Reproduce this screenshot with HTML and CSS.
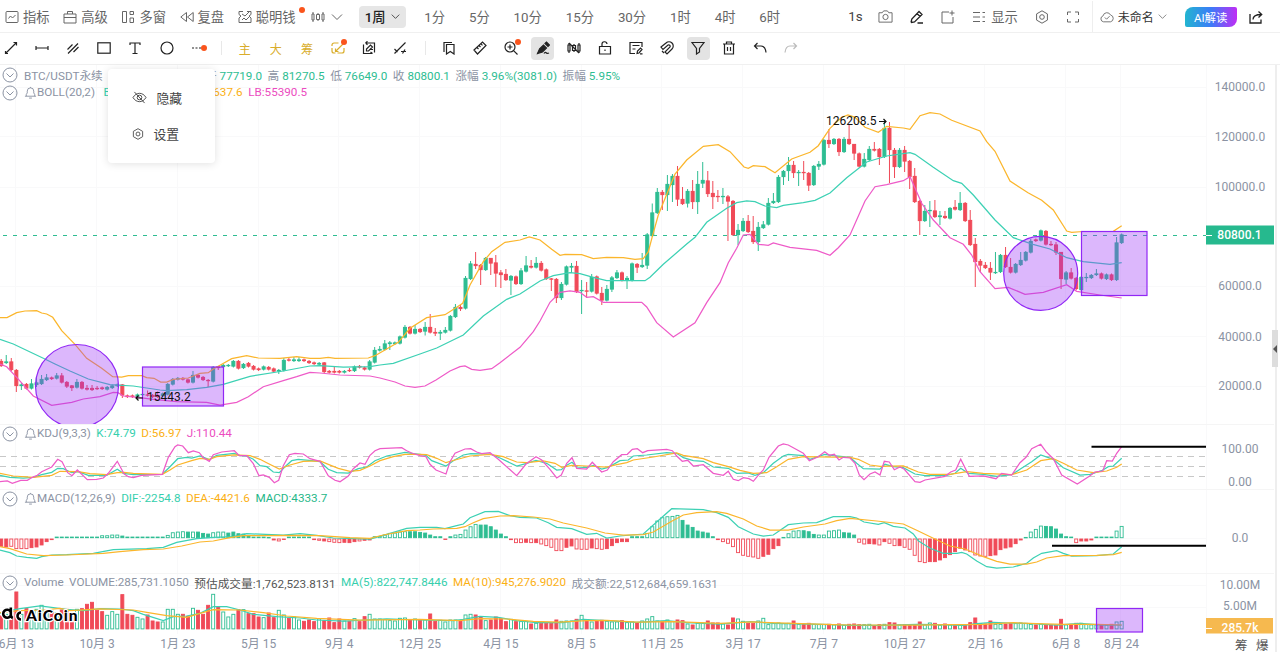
FILE: index.html
```html
<!DOCTYPE html>
<html lang="zh-CN">
  <head>
    <title>AiCoin</title>
    <meta charset="utf-8" />
    <link rel="stylesheet" href="styles.css">
  </head>
  <body>
    <svg class="sprite">
      <symbol id="chevron" viewBox="0 0 12 12"><path d="M1 3.5l5 5 5-5" /></symbol>
      <symbol id="collapse" viewBox="0 0 16 16"><circle cx="8" cy="8" r="7" /><path d="M4.5 6.5L8 10l3.500-3.500" /></symbol>
      <symbol id="bell" viewBox="0 0 14 14"><path d="M1 11h12M2.500 11V9l1-1.500V5.500a3.500 3.500 0 0 1 7 0v2L11.500 9v2M5.500 13h3M7 2V1" /></symbol>
      <symbol id="candles" viewBox="0 0 14 14"><path d="M1 4h2v6H1zM5.500 4.500h3v5h-3zM11 4h2v6h-2zM2 2v2M2 10v2M7 3v1.500M7 9.500V11M12 2v2M12 10v2" /></symbol>
      <symbol id="gear" viewBox="0 0 14 14"><path d="M7 .8l5.400 3.100v6.200L7 13.200l-5.400-3.100V3.900z" /><circle cx="7" cy="7" r="2.300" /></symbol>
    </svg>

    <header class="topbar">
      <div class="menu-item"><svg class="icon" viewBox="0 0 14 14"><rect x="1" y="1.500" width="12" height="11" rx="1" /><path d="M3.500 8.500l2-2.500 2 2L10.500 5" /></svg>指标</div>
      <div class="menu-item"><svg class="icon" viewBox="0 0 14 14"><path d="M1 4h12v9H1zM1 7.500h12M4.500 4V1.500h5V4" /></svg>高级</div>
      <div class="menu-item"><svg class="icon" viewBox="0 0 14 14"><path d="M1.500 1.500h4v11h-4zM9 1.500h3.500v3H9zM9 8h3.500v4.500H9z" /></svg>多窗</div>
      <div class="menu-item"><svg class="icon" viewBox="0 0 14 14"><path d="M6.500 2.500v9L.8 7zM13.200 2.500v9L7.500 7z" /></svg>复盘</div>
      <div class="menu-item menu-wide"><svg class="icon" viewBox="0 0 14 14"><path d="M5 1.500H1v3l2 1.500-2 2v4.500h12V8l-2-2 2-1.500v-3H9M4 4l3 2 4-4M4 10l2-2 2 2 3-3" /></svg>聪明钱<i class="dot"></i></div>
      <svg class="icon" viewBox="0 0 14 14"><use href="#candles" /></svg>
      <svg class="icon icon-arrow" viewBox="0 0 12 12"><use href="#chevron" /></svg>
      <button class="period-active">1周<svg class="icon" viewBox="0 0 12 12"><use href="#chevron" /></svg></button>
      <nav class="periods">
        <span>1分</span><span>5分</span><span>10分</span><span>15分</span><span>30分</span><span>1时</span><span>4时</span><span>6时</span>
      </nav>
      <div class="actions">
        <span class="second">1s</span>
        <svg class="icon icon-camera" viewBox="0 0 16 16"><path d="M1 4h3.500L6 2h4l1.500 2H15v10H1z" /><circle cx="8" cy="8.500" r="2.800" /></svg>
        <svg class="icon icon-edit" viewBox="0 0 14 14"><path d="M1 12.500l.8-3.500L9 1.500l3 3L4.500 12 1 12.500M7 3.500l3 3M7.500 13H13" /></svg>
        <svg class="icon icon-add" viewBox="0 0 14 14"><path d="M8 2H1v11h11V7M11 .5v5M8.500 3h5" /></svg>
        <span class="display"><svg class="icon" viewBox="0 0 14 14"><path d="M1 2.500h7M1 7h7M1 11.500h7M10.500 2.500H13M10.500 7H13M10.500 11.500H13" /></svg>显示</span>
        <svg class="icon icon-gear" viewBox="0 0 14 14"><use href="#gear" /></svg>
        <svg class="icon icon-full" viewBox="0 0 14 14"><path d="M1.500 5V2H5M9 2h3.500v3M12.500 9v3H9M5 12H1.500V9" /></svg>
      </div>
      <div class="layout-name">
        <svg class="icon" viewBox="0 0 16 14"><path d="M4 12.500a3.500 3.500 0 0 1-.5-6.800 4.500 4.500 0 0 1 8.500-1 4 4 0 0 1 0 7.800zM5.500 7.500l2 2 3.500-3.500" /></svg>
        未命名
        <svg class="icon name-arrow" viewBox="0 0 12 12"><use href="#chevron" /></svg>
      </div>
      <button class="ai-button">AI解读</button>
      <svg class="icon icon-share" viewBox="0 0 14 14"><path d="M1 4v9h11V9.500M4 9.500C4 6 6.500 4.500 12.500 4.500M9.500 1.500l3.200 3-3.200 3" /></svg>
    </header>

    <div class="drawbar">
      <span class="tool"><svg viewBox="0 0 14 14"><path d="M2 12L12 2M9.500 1.500h3v3M1.500 10v2.500H4" /></svg></span>
      <span class="tool"><svg viewBox="0 0 14 14"><path d="M1 7h12M1 5v4M13 5v4" /></svg></span>
      <span class="tool"><svg viewBox="0 0 14 14"><path d="M1.500 8.500l5-5M2 12.500l10-10M7.500 11l5-5" /></svg></span>
      <span class="tool"><svg viewBox="0 0 14 14"><rect x=".8" y="1.800" width="12.400" height="10.400" /></svg></span>
      <span class="tool"><svg viewBox="0 0 14 14"><path d="M2 4V2h10v2M7 2v10.500M4.500 12.500h5" /></svg></span>
      <span class="tool"><svg viewBox="0 0 14 14"><circle cx="7" cy="7" r="6" /></svg></span>
      <span class="tool"><svg viewBox="0 0 14 14"><path class="dots" d="M1 7h10" /></svg><i class="dot dot-center"></i></span>
      <i class="separator"></i>
      <span class="tool gold">主</span>
      <span class="tool gold">大</span>
      <span class="tool gold">筹</span>
      <span class="tool gold"><svg viewBox="0 0 14 14"><path d="M7.500 2H3a2 2 0 0 0-2 2v1M1 7v3a2 2 0 0 0 2 2h1.500M6.500 12H11a2 2 0 0 0 2-2V7M4.500 10.500L12 3M4.500 7.500v3h3" /></svg><i class="dot"></i></span>
      <span class="tool"><svg viewBox="0 0 14 14"><path d="M4 2h8.500v9.500M3.500 2L5.500.3M3.500 2l2 1.700M10.500 12.500H1.500V3.500M10.500 12.500l-2-1.500M4.500 10V8l4-4 2 2-4 4zM8 8.500h3" /></svg></span>
      <span class="tool"><svg viewBox="0 0 14 14"><path d="M1.500 12.500L12.500 1.500M1.500 8l3 3M8 10.500h5M9.500 12.500l2.500-4" /></svg></span>
      <i class="separator separator-wide"></i>
      <span class="tool"><svg viewBox="0 0 14 14"><path d="M2 11V1.500h8M4.500 3.500H12V13l-3.700-2.500L4.500 13z" /></svg></span>
      <span class="tool"><svg viewBox="0 0 14 14"><path d="M1 9l8.500-8L13 4.500 4.500 13zM4 6.500l1.500 1.500M6 4.500L7.500 6M8 2.800L9.500 4.300" /></svg></span>
      <span class="tool"><svg viewBox="0 0 14 14"><circle cx="6" cy="6" r="5" /><path d="M9.800 9.800l3.700 3.700M3.500 6h5M6 3.500v5" /></svg><i class="dot"></i></span>
      <span class="tool selected"><svg viewBox="0 0 14 14"><path class="solid" d="M3.500 8l4-4 3 3-4 4-5 1.500zM9 2.500l1.500-1.500 3 3L12 5.500z" /><path d="M8 12.500c1-2 2-1 2.500-.5s1.500.5 2.500 0" /></svg></span>
      <span class="tool"><svg viewBox="0 0 14 14"><use href="#candles" /><path d="M2 2l10 10" /></svg></span>
      <span class="tool"><svg viewBox="0 0 14 14"><path d="M1.500 5.500h11v7.500h-11zM4 5.500V3.500A2.500 2.500 0 0 1 9 3M7 8.500V10" /></svg></span>
      <span class="tool"><svg viewBox="0 0 14 14"><path d="M13 6V1.500H1v11h5M3.500 4.500h7M3.500 8h3M8 12.500l.5-2.500 3-3L13 8.500l-3 3.500zM11 12.800h2.500" /></svg></span>
      <span class="tool"><svg viewBox="0 0 14 14"><path d="M1 6l5-4a4 4 0 0 1 6 6l-5 5-2-2 5-5a1.500 1.500 0 0 0-2-2L3 8.500zM4 12L2 10" /></svg></span>
      <span class="tool selected"><svg viewBox="0 0 14 14"><path d="M1 1.500h12L8.500 7.500V11l-3 2V7.500z" /></svg></span>
      <span class="tool"><svg viewBox="0 0 14 14"><path d="M1 3h12M4.500 3V1h5v2M2.500 3v10h9V3M5.500 6v4M8.500 6v4" /></svg></span>
      <span class="tool"><svg viewBox="0 0 14 14"><path d="M4.500 2L1.500 5l3 3M1.500 5H8c3 0 4.500 2 5 6.500" /></svg></span>
      <span class="tool disabled"><svg viewBox="0 0 14 14"><path d="M9.500 2l3 3-3 3M12.500 5H6c-3 0-4.500 2-5 6.500" /></svg></span>
    </div>

    <main class="chart">
      <section class="panel">
        <div class="legend">
          <div class="legend-row">
            <svg class="collapse" viewBox="0 0 16 16"><use href="#collapse" /></svg>
            <span class="symbol-name">BTC/USDT永续</span>
            <span>开 <b>77719.0</b></span>
            <span>高 <b>81270.5</b></span>
            <span>低 <b>76649.0</b></span>
            <span>收 <b>80800.1</b></span>
            <span>涨幅 <b>3.96%(3081.0)</b></span>
            <span>振幅 <b>5.95%</b></span>
          </div>
          <div class="legend-row">
            <svg class="collapse" viewBox="0 0 16 16"><use href="#collapse" /></svg>
            <svg class="bell" viewBox="0 0 14 14"><use href="#bell" /></svg>
            <span class="boll-name">BOLL(20,2)</span>
            <span class="teal">B</span>
            <span class="orange boll-ub">637.6</span>
            <span class="pink">LB:55390.5</span>
          </div>
        </div>
        <svg id="price" class="plot" viewBox="0 65 1274 359" height="359"></svg>
        <div class="popup">
          <div class="popup-item"><svg viewBox="0 0 16 14"><path d="M1 7c3.500-6 10.500-6 14 0-3.500 6-10.500 6-14 0zM2.500 1l11 12" /><circle cx="8" cy="7" r="2.500" /></svg>隐藏</div>
          <div class="popup-item popup-settings"><svg viewBox="0 0 14 14"><use href="#gear" /></svg>设置</div>
        </div>
      </section>

      <section class="panel">
        <div class="legend">
          <div class="legend-row">
            <svg class="collapse" viewBox="0 0 16 16"><use href="#collapse" /></svg>
            <svg class="bell" viewBox="0 0 14 14"><use href="#bell" /></svg>
            <span>KDJ(9,3,3)</span>
            <span class="teal">K:74.79</span>
            <span class="orange">D:56.97</span>
            <span class="pink">J:110.44</span>
          </div>
        </div>
        <svg id="kdj" class="plot" viewBox="0 424 1274 65" height="65"></svg>
      </section>

      <section class="panel">
        <div class="legend">
          <div class="legend-row">
            <svg class="collapse" viewBox="0 0 16 16"><use href="#collapse" /></svg>
            <svg class="bell" viewBox="0 0 14 14"><use href="#bell" /></svg>
            <span>MACD(12,26,9)</span>
            <span class="teal">DIF:-2254.8</span>
            <span class="orange">DEA:-4421.6</span>
            <span class="green">MACD:4333.7</span>
          </div>
        </div>
        <svg id="macd" class="plot" viewBox="0 489 1274 84" height="84"></svg>
      </section>

      <section class="panel">
        <div class="legend">
          <div class="legend-row">
            <svg class="collapse" viewBox="0 0 16 16"><use href="#collapse" /></svg>
            <span>Volume</span>
            <span>VOLUME:285,731.1050</span>
            <span class="dark">预估成交量:1,762,523.8131</span>
            <span class="teal">MA(5):822,747.8446</span>
            <span class="orange">MA(10):945,276.9020</span>
            <span>成交额:22,512,684,659.1631</span>
          </div>
        </div>
        <svg id="volume" class="plot" viewBox="0 573 1274 79" height="79"></svg>
      </section>
      <div class="handle"></div>
    </main>

    <script src="chart.js"></script>
  </body>
</html>
```

FILE: styles.css
```css
* {
  box-sizing: border-box;
}

body {
  width: 1280px;
  height: 652px;
  margin: 0;
  overflow: hidden;
  font-family: Roboto, "Noto Sans CJK SC", sans-serif;
  font-size: 13.3px;
  color: #666;
  background-color: #fff;
}

svg {
  fill: none;
  stroke: currentColor;
  flex: none;
}

.sprite {
  display: none;
}

.topbar {
  display: flex;
  align-items: center;
  height: 33px;
  padding: 0 0 0 5px;
  border-top: 1px solid #fff;
  border-bottom: 1px solid #f0f0f0;
  white-space: nowrap;
}

.icon {
  width: 14px;
  height: 14px;
}

.menu-item {
  position: relative;
  display: flex;
  align-items: center;
  gap: 4px;
  width: 58.2px;
}

.menu-wide {
  width: 73px;
}

.dot {
  position: absolute;
  top: 0;
  right: 6px;
  width: 6px;
  height: 6px;
  border-radius: 50%;
  background-color: #fa541c;
}

.icon-arrow {
  width: 12px;
  height: 12px;
  margin-left: 6px;
}

button {
  border: none;
  font-family: inherit;
  padding: 0;
}

.period-active {
  display: flex;
  align-items: center;
  justify-content: center;
  gap: 5px;
  width: 47px;
  height: 22px;
  margin-left: 16px;
  border-radius: 4px;
  background-color: #e6e6e6;
  color: #222;
  font-size: 13.3px;
  font-weight: 500;
}

.period-active .icon {
  width: 9px;
  height: 9px;
}

.periods {
  display: flex;
  gap: 23.9px;
  width: 423px;
  padding-left: 18.5px;
}

.actions {
  display: flex;
  align-items: center;
  width: 264px;
  height: 31px;
  padding-left: 19.5px;
  border-right: 1px solid #eee;
}

.second {
  width: 30px;
  color: #444;
}

.icon-camera {
  width: 15px;
  height: 15px;
}

.icon-edit {
  margin-left: 17px;
  color: #222;
  stroke-width: 1.3;
}

.icon-add {
  margin-left: 17px;
}

.display {
  display: flex;
  align-items: center;
  gap: 5px;
  margin-left: 17px;
}

.icon-gear {
  margin-left: 17px;
}

.icon-full {
  margin-left: 17px;
}

.layout-name {
  display: flex;
  align-items: center;
  gap: 4px;
  margin-left: 7px;
  font-size: 12px;
  color: #333;
}

.layout-name .icon {
  color: #666;
}

.layout-name .name-arrow {
  width: 9px;
  height: 9px;
}

.ai-button {
  width: 52px;
  height: 20px;
  margin-left: 18px;
  border-radius: 8px 2px 8px 2px;
  background: linear-gradient(90deg, #22b5d0, #3b7bf8 50%, #c02cf5);
  color: #fff;
  font-size: 11.5px;
}

.icon-share {
  margin-left: 12px;
  color: #222;
  stroke-width: 1.3;
}

.drawbar {
  display: flex;
  align-items: center;
  height: 32px;
  margin-left: -4.5px;
  padding-bottom: 1px;
  border-bottom: 1px solid #f0f0f0;
  color: #222;
}

.tool {
  position: relative;
  display: flex;
  align-items: center;
  justify-content: center;
  flex: none;
  width: 23px;
  height: 23px;
  margin: 0 4.05px;
  border-radius: 4px;
}

.tool svg {
  width: 14px;
  height: 14px;
  stroke-width: 1.2;
}

.tool .dot {
  top: 2px;
  right: 2px;
}

.tool .dot-center {
  top: 8px;
}

.dots {
  stroke-dasharray: 2 1.5;
}

.solid {
  fill: currentColor;
}

.gold {
  color: #d9ad2b;
  font-size: 12px;
}

.selected {
  background-color: #e3e3e3;
}

.disabled {
  color: #bbb;
}

.separator {
  flex: none;
  width: 1px;
  height: 14px;
  margin: 0 7px 0 8px;
  background-color: #e8e8e8;
}

.separator-wide {
  margin: 0 8px 0 9px;
}

.chart {
  position: relative;
  width: 1277px;
  height: 587px;
  border-right: 2px solid #eee;
}

.panel {
  position: relative;
}

.plot {
  display: block;
  width: 1274px;
}

.legend {
  position: absolute;
  top: 0;
  left: 2px;
}

.legend-row {
  display: flex;
  align-items: center;
  height: 18px;
  color: #8b93a3;
  font-size: 11.7px;
  white-space: nowrap;
}

.legend-row span {
  margin-right: 5.5px;
}

.legend-row b {
  color: #2ebd92;
  font-weight: 400;
}

.collapse {
  width: 16px;
  height: 16px;
  margin-right: 6px;
  position: relative;
  top: 1px;
  stroke-width: 1;
}

.bell {
  width: 13px;
  height: 13px;
  margin-right: 0;
}

.legend-row .symbol-name {
  width: 175.5px;
}

.legend-row .boll-name {
  width: 61px;
}

.legend-row .boll-ub {
  margin-left: 97px;
}

.teal {
  color: #36cfad;
}

.orange {
  color: #fbb013;
}

.pink {
  color: #ec4cc0;
}

.green {
  color: #26b788;
}

.dark {
  color: #555;
}

.popup {
  position: absolute;
  top: 4px;
  left: 108px;
  width: 107px;
  height: 94px;
  padding: 10px 24px;
  border-radius: 4px;
  background-color: #fff;
  box-shadow: 0 1px 8px rgba(0, 0, 0, 0.12);
}

.popup-item {
  display: flex;
  align-items: center;
  gap: 9.500px;
  height: 36.5px;
  font-size: 12.8px;
  color: #444;
}

.popup-item svg {
  width: 15px;
  height: 13px;
}

.popup-settings svg {
  width: 12px;
  height: 12px;
}

.handle {
  position: absolute;
  top: 265px;
  right: -3px;
  width: 6px;
  height: 37px;
  background-color: #ddd;
}

.handle::after {
  content: "";
  position: absolute;
  top: 15px;
  left: 1px;
  border: 4px solid transparent;
  border-left-width: 0;
  border-right-color: #555;
}

.grid {
  stroke: #f9f9fa;
}

.divider {
  stroke: #f5f5f5;
}

.guide {
  stroke: #c8c8c8;
  stroke-dasharray: 6 5;
}

.last-price {
  stroke: #2ebd92;
  stroke-width: 1.2;
  stroke-dasharray: 4 6;
}

.up {
  stroke: #2ebd92;
  fill: #2ebd92;
}

.down {
  stroke: #f04a58;
  fill: #f04a58;
}

.hollow {
  fill: #fff;
}

.bar {
  stroke-width: 0.9;
}

.line-teal {
  stroke: #3dd1b4;
  stroke-width: 1.25;
}

.line-orange {
  stroke: #fbb62c;
  stroke-width: 1.25;
}

.line-pink {
  stroke: #ee5bc8;
  stroke-width: 1.25;
}

.marker {
  fill: rgba(155, 50, 245, 0.35);
  stroke: #9127f5;
  stroke-width: 1.2;
}

.trend {
  stroke: #000;
  stroke-width: 2;
}

.arrow {
  stroke: #111;
  stroke-width: 1.2;
}

text {
  stroke: none;
  fill: #8b93a3;
  font-size: 12px;
}

.centered {
  text-anchor: middle;
}

.extreme {
  fill: #111;
}

.tag-green {
  fill: #26b98e;
  stroke: none;
}

.tag-orange {
  fill: #f6b94f;
  stroke: none;
}

.tag-text {
  fill: #fff;
  font-weight: 500;
}

.tag-tick {
  stroke: #fff;
}

.axis-button {
  fill: #555;
  font-size: 12.5px;
}

.logo {
  fill: #000;
  stroke: #fff;
  stroke-width: 2.5px;
  paint-order: stroke;
  font-family: Lato, Roboto, sans-serif;
  font-size: 15.5px;
  font-weight: 900;
  letter-spacing: 1px;
}

.logo-halo {
  stroke: #fff;
  stroke-width: 5;
}

.logo-mark {
  stroke: #000;
  stroke-width: 2.6;
}
```

FILE: chart.js
```js
const STEP = 5.047;
const FIRST = 1.2;
const RIGHT = 1206;
const NS = "http://www.w3.org/2000/svg";

// direction, body top, body bottom, high, low
const candles = `
d361,366,359 u361.5,363,355,364 d361.5,370,358 d370,386,369,392 u384.5,386,383,390 d384,388.5 u383.5,388.5,379 u382.5,385,377,387
u379,384,375 u377.5,380,374 d377.5,379 u375.5,378.5,373 d375.5,382.5,373 d382,386.5,381,388 d385.5,388,385,391 u382,387.5,379
d382,388.5 d388,389.5,385 d388,390,385 d388,389,386 d387.5,389 u387,389.5 u385.5,388 u384.5,386
d384.5,395.5,384,398 d395.5,397 d395.5,397 u394.5,397 u394,395 d394.5,395.5,390.5 d395,397 d395,397,391.5
u393.5,396 u384,394.5 u379,384.5 u378,379.5 d378,379.5 d379.5,382.5 u375,382.5,371 d375,377.5
d377,380 d380,381,379,387 u367,381.500 d366.5,368,366,370 u365,367 u365,366 u361,366.5 d361,368.5
u364,368 d363,366.5 d366,369.5 d368.5,370 u366.5,369.5 d367,369.5 d368.5,371.5 u370,371.5,369,374
u360,370.5,358 d359.5,360.5,357 u359.5,361,357 u359.5,361,357 d359.5,361 d361,363 d362.5,364 u363,364.5
d362.5,372,362,373 d371,372.5 d371,372.5,366 d371,372.5 u371,372.5 d370,371,368 u366.5,371 d366,367.5,365
d367.5,369.5 u361.5,369.5,360 u350,362.5,347 u349,350.5,346 u343.5,349.5,340 u342.5,344,341,350 u342.5,344 u336.5,343.5,335.5
u327,337.5,325 d327,333.5 u329,333.5,325 d329,332 u327,331.5,322,335.5 d327,332.5,314 d332,333.5,328,336 u332,333.5,330,340
u330,332.5,327 u316,330.5 u307,317,304 d307,309,305,311 u278,308.5,276 u263.5,279,261 d264,266,252,269 d265,270,264,285
u258,270,257 d258,263.5,258,275 d262.5,273.5,255,287 d272.5,275,270,288 d274,280,269 u276,280.5,275,295 d276.5,284 u270.5,284,268
u265.5,271.5,256 d266,267.5,260 u263,267.5,257 d263,270.5,261 d269.5,279 d278.5,279.5,278,291 d279,298,278,303 u284,298,282,300
u266.5,284.5 u266,267.5,263,273 d266,292,261 u290,291,280,314 d290.5,291.5,282,298 u277,291.5,274 d276.5,293.5 d293,300.5,287,305
u289,300.5,285 u277.5,289.5,276,292 u272.5,278,270 d272.5,280.5 u278,280,276,289 u263.5,280.5 d264,267.5,263,273 u265,267,253
u234.5,265.5,233,269 u212.5,236,203.5 u192,213,188 d192,195,190,210 u184,195,175,211 u176,185,174,202 d176,199.5,166,206 d199,204,187
u191,203.5,189,207.5 d191,202,180,209 u184,202,171,214 u180,183.5,162,188 d180.5,194,171,197 d193,197,181,209 d196,197,190,202 u196,197,188,204
d196.5,201.5,195,241 d201,235 u230,235,224,245 u221,231,218 d221,232,215 d231,242,216,244 u227,242,222,251 u224.5,228,221
u203,224.5,198 u201,203,193 u177,202,175 u171,177,170,185 u165,171,157,181 d165,173,161,178 u172,173,170,186 d172,173,161,180
d173,185.5,172,191 u166,185 u164,166.5,161,170 u140,164.5 d140,144,129,148 u139,144,138 d139,152,138,156 u139,152,137
d139,144,125 d144,153.5,144,160 d153.5,166.5 u159,166.5,153 u149,160,146 d149,150.5,142 d149,157,148,165 u128,157,122
d128,150,122,183 d150,167,148,178 u150,167,148 d150,161.5,146,172 d161,177,160,189 d176,202,168 d201,221,200,235 u211,221,205
u210,211,201,227 d210.5,217,200 u215.5,217,211,225 d216,218,211 u208,218.5 d207,209.5,200 u203,210,192 d203,221
d220,245,210 d244,262,238,287 d261,265.5,259,272 d265,268,262 d268,272.5,262,280 u272,273,252 u255,272 d255,267,247
d267,272.5,258 u264,272.5 u260,265,252 u252,260.5 u241,252.5,239 d239.5,241 u230.5,240.5 d231,244.5
d244,245,241 d244.5,252.5,242,255 d252,279,252,289 u272.5,279.5,271,284 d272.5,278.5,268 d278,289 u277,290 u277,278,273,282
u275,278 u273.5,275,269 d273.5,278.5 u274.5,279 d274.5,280 u242.5,280,237 u234.5,243`.trim().split(/\s+/).map((c) => {
  const [top, bottom, high, low] = c.slice(1).split(",").map(Number);
  return { up: c[0] === "u", top, bottom, high: high || top - 1, low: low || bottom + 1 };
});

// f = filled, h = hollow, height in thirds of a pixel
const macdBars = `-24f -26f -24h -31h -31h -31h -28f -26f -20f -10f -4f 4f 4f 4f 4f 4f 4f 4f 4f 4f 8h 8h 10h 10h 7f 4f 4f 4f 4f 4f 4f 4f 4f
9h 17h 19h 20h 19f 19h 19f 15f 13f 17h 19h 19h 16f 19f 14f 13f 8f 4f 4f 4f 3f -5f -8h -3f 4f 4f 4f 4f 4f -4f -6h -8f -10h -12h -13h -12f -13f -10f -8h
-6f -5f 5f 6h 10h 15h 16h 19h 20h 20f 20f 18f 16f 10f 5f 5f -3f 5f 10h 12h 25h 35h 42h 40f 40f 35f 25f 13f 5f -4f -13h -13h -12f -13h -13f -17h -22h
-27h -37h -37h -27f -23f -32h -33h -33h -29f -31h -33h -31f -22f -13f -10f -10f 5f 5f 5f 15h 35h 52h 62h 65h 66h 69h 54f 40f 33f 22f 19f 16f 5f
-4f -10h -15h -25h -43h -51h -54h -56h -60h -54f -48f -31f -22f 3f 14h 22h 23h 23f 20f 12f 10h 10h 22h 23h 25h 17f 16f 10f -12h -17h -16f -17f -20h
-10f -15h -22h -22f -27h -33h -51h -70h -73h -70f -70f -65f -58f -49f -40f -30f -35f -40h -50h -53h -54h -52f -50f -34f -29f -26f -16f -5f 3f 19h 27h
37h 36f 35f 28f 13f 5f 4f -13h -8f -8f -5f 4f 4f 4f 4f 22h 36h`.trim().split(/\s+/);

const volumes = `40 45 50 112 45 62 55 60 72 50 55 50 58 60 45 60 62 75 81 57 53 42 53 45 104 45 42 36 31 43 25 22 22 60 60 45 45 39 63 57
45 72 105 67 52 37 45 59 59 47 47 37 35 49 35 57 43 33 37 28 24 28 23 31 26 34 20 31 25 24 32 23 38 45 31 31 29 26 25 33
34 28 31 28 28 46 24 27 22 28 28 25 43 45 43 38 26 28 37 32 23 30 23 23 24 16 18 18 18 18 28 24 25 25 30 42 27 22 25 27
24 22 22 26 20 22 20 25 31 38 25 24 28 23 28 26 16 13 18 18 25 19 19 16 13 34 31 24 18 18 25 33 14 17 19 17 18 25 15 16
18 15 14 14 15 13 16 12 15 16 14 14 15 11 14 15 20 19 13 14 13 14 22 13 19 18 12 16 13 11 13 14 20 34 17 16 25 15 15 16
18 17 19 18 15 13 16 12 13 12 30 13 15 18 18 14 13 13 14 12 15 22 24`.trim().split(/\s+/).map(Number);

const bands = {
  orange: `0,317.5 7,317.5 16.7,312.7 25,311 36.7,310.7 41.7,313 46.7,314 52.7,317.3 61.7,330.7 75,344.3 86.7,358.3 101.7,368.3 112.7,376.7
121.7,377 128.3,375.7 141.7,375.7 146.7,377.7 154,378.3 160.7,382 166.7,382 173.3,379.3 188.3,378 200,373.3 208.3,372.7 213.3,369 220,365.3
231.7,358.7 246.7,355.7 258.3,358 280,358.3 296.7,356.7 310,358.3 320,358.3 328.3,357.3 335,358.3 368.3,358 375,355.7 398.3,342.3 410,328.3
426.7,317.7 445,314.7 456.7,307.3 462.7,303.3 470,285 483.3,261.7 491.7,251.7 505,242.3 520,240 529.3,237 540,240 551.7,249.3 560,255.3
565,254.3 581.7,254.7 593.3,258.7 606.7,257.3 623.3,257.7 635,259.3 643.3,258.7 648.3,251.7 652.3,236.7 658.3,215 675,174 686.7,160
703.3,146.3 718.3,144.7 730,151.7 744,167 748.3,168.3 753.3,165.7 765,166.7 775,172.7 791.7,159 810,152.3 818.3,145.7 830,128.3 841.7,117.3
848,115 855,117.3 865,127.3 878.3,132.3 886.7,126.3 903.3,128 910,129.3 920,115.7 930,112.7 940,114 951.7,120.3 980,131 986.7,141.7 995,151.3
1010,181 1028,192.7 1041.7,200.3 1053.3,210 1066.7,231 1071.7,232.3 1083,231.5 1113.3,231.3 1121.7,225.7`,
  teal: `0,339.3 13.3,344 43.3,358.3 55,364 70,371 88.3,379 110,384.7 133.3,386 160,390 166.7,390.7 186.7,389.7 206.7,387.3 223.3,384.3
250,376.3 283.3,371 310,366 320,365.6 343.3,367 370,366.7 380,365 393.3,363.3 420,354 436.7,348 463.3,335 483.3,316 506.7,299.3 520,294
540,281 553.3,275.7 570,272.7 580,273.7 593.3,277.3 606.7,280.7 645,280.7 650,277.3 663.3,264.3 686.7,244 695,237.3 706.7,222.3 726.7,208.3
736.7,202.7 746.7,201 755,201.7 765,206 776.7,207.7 783.3,205.3 803.3,202.7 815,200.3 830,193 846.7,177.7 866.7,162 886.7,156 910,152.7
915,154.3 933.3,167.3 953.3,180.7 961.7,183.3 973.3,195 995,220 1013.3,237.7 1033,244.3 1050,249 1066.7,257.7 1083.3,261.7 1110,264.3 1121.7,262.7`,
  pink: `0,364 6.7,366.7 16.7,377.3 33.3,396 51.7,405.3 71.7,402.3 83.3,399 100,396.7 113.3,392.3 118,392.7 123.3,396 140,397.7 153.3,399.3
176.7,401.7 206.7,402.3 220,405 236.7,402.3 248.3,396.7 263.3,386.7 283.3,380.7 296.7,376.7 310,372.3 320,373 340,375 370,376 380,378 395,382
405,386 415,387.3 425,386 436,380 450,371 460,366.7 465,366 471.7,369.3 480,370.3 491.7,368.7 500,362.7 520,347.3 533.3,331.7 540,321
550,302.3 560,292.3 570,291 580,292.3 586.7,297.3 593.3,296.7 603.3,302.3 641.7,302.3 646.7,307 656.7,322.7 673.3,337 695,322.7 706.7,302.7
720,282.7 728.3,262.7 736.7,248.3 743.3,235 750,234.3 758.3,244.3 768.3,245.3 773.3,243 790,247.3 816.7,250.3 830,255.3 838.3,247.7 850,235
865,201 875,186.7 886.7,184.7 903.3,180.7 910,176.7 921.7,203.3 933.3,220 950,237.7 963.3,244.3 971.7,255 980,271.7 995,288.7 1008.3,287.3
1025,294.3 1043.3,292.3 1066.7,284.7 1076.7,291.3 1100,295 1121.7,298`,
};

// sub-chart series: [left edge, points in thirds of a pixel]
const kdj = {
  teal: [
    [0, "0,166 30,172 70,174 100,172 125,164 155,157 173,145 190,146 215,158 235,155 265,166 320,166 352,148 370,160 400,164 487,163 510,140 533,116 560,112 575,114 600,108 628,119 650,106 703,100 720,107 740,108 760,118 780,137 800,140 820,156 838,158 855,140 875,122 895,118 935,122 960,125 985,148 1010,158 1045,159 1075,146 1100,141 1125,122 1160,108 1215,97 1240,101"],
    [420, "0,103 18,106 35,122 78,138 100,122 130,105 152,101 210,102 240,114 290,138 320,130 348,121 380,130 410,150 424,149 440,136 456,127 470,141 500,143 520,136 545,147 565,142 600,122 625,120 640,108 680,105 740,98 770,100 790,113 820,122 850,124 880,141 925,145 950,160 985,159 1005,166 1030,158 1060,130 1090,108 1105,103 1150,107 1170,118 1214,103 1240,107"],
    [850, "0,112 20,130 40,146 90,147 105,133 130,140 160,143 195,162 225,167 290,166 315,160 332,145 355,160 400,163 440,169 485,164 510,148 545,125 572,105 610,118 640,143 690,165 720,163 755,152 775,140 790,138 815,115"],
  ],
  orange: [
    [0, "0,160 40,168 100,172 155,166 180,154 235,155 270,161 320,164 352,158 372,157 400,160 487,163 510,150 533,135 575,122 600,115 628,118 650,110 703,105 750,107 780,118 800,128 838,147 870,135 910,124 960,123 985,133 1015,145 1050,154 1080,151 1110,138 1140,122 1180,110 1215,103"],
    [420, "0,103 20,104 50,115 78,128 105,120 150,108 210,103 250,110 290,126 320,128 370,123 405,130 425,142 456,136 500,138 560,141 590,134 620,128 640,120 700,111 770,99 790,106 850,116 880,128 925,140 960,151 1000,160 1040,158 1070,140 1105,118 1150,110"],
    [850, "0,112 25,118 60,135 90,139 160,138 205,156 240,163 300,163 350,155 400,160 485,164 530,150 572,122 610,116 640,130 680,150 730,158 770,153 800,142 815,132"],
  ],
  pink: [
    [0, "0,185 22,183 37,190 62,181 82,181 97,172 112,166 125,155 155,141 173,118 186,125 203,158 216,167 232,150 262,179 290,178 310,174 325,160 352,124 372,161 385,170 400,173 425,166 487,163 505,112 525,80 533,75 548,78 565,98 580,93 598,98 610,113 628,124 640,104 665,96 703,92 718,107 740,107 760,131 777,167 790,165 808,172 823,188 836,181 850,137 868,104 885,100 910,102 930,116 960,124 985,167 1005,181 1020,185 1045,168 1060,146 1080,129 1095,133 1110,106 1125,92 1140,86 1205,83 1220,92 1235,99"],
    [420, "0,107 18,110 30,133 48,150 78,162 90,125 105,100 135,87 152,86 170,96 185,101 210,98 235,118 290,167 318,132 348,110 365,120 390,148 410,174 424,165 440,130 456,113 470,145 500,147 517,127 545,156 562,150 580,125 605,104 622,103 637,88 652,86 668,98 683,92 740,88 757,92 770,108 787,124 803,121 820,138 850,134 880,160 910,166 925,154 940,178 955,182 970,173 987,176 1000,184 1017,163 1030,150 1047,112 1075,78 1090,72 1105,75 1150,100 1168,122 1195,110 1214,95 1228,106 1243,103 1257,120 1270,112"],
    [850, "0,114 15,130 28,165 42,179 60,162 75,156 90,165 103,124 118,126 133,149 150,141 163,148 195,185 210,187 225,180 285,169 302,156 317,150 332,118 358,169 400,168 438,176 455,160 485,165 510,128 528,112 545,86 572,73 588,95 610,116 635,165 682,192 718,169 735,156 758,153 770,122 787,123 800,100 815,80"],
  ],
};

const macd = {
  teal: [
    [0, "0,390 30,398 50,408 80,412 110,415 125,410 155,405 200,404 280,400 340,389 440,386 490,382 530,367 590,356 640,352 700,350 740,341 850,345 900,341 950,346 1000,354 1110,357 1170,340 1220,325"],
    [420, "0,322 50,322 75,326 110,317 130,312 150,293 195,275 235,274 270,287 300,292 350,294 385,308 410,322 455,326 500,343 530,340 560,354 600,348 670,342 700,315 755,266 850,269 890,278 925,292 955,320 1000,342 1030,348 1060,345 1105,314 1150,309 1190,308 1240,290"],
    [850, "0,290 20,294 42,306 85,313 103,308 130,319 165,324 190,342 205,362 240,385 280,400 320,400 335,397 350,402 380,423 410,440 440,444 490,441 530,430 550,414 575,400 620,392 640,400 665,408 740,407 790,402 815,380"],
  ],
  orange: [
    [0, "0,380 30,386 80,402 130,407 200,405 310,400 360,395 430,389 490,387 545,378 600,366 640,363 690,353 730,347 900,346 960,347 1050,353 1110,355 1150,345 1220,332"],
    [420, "0,330 40,327 110,325 135,320 160,308 190,296 240,288 280,287 340,291 390,297 430,309 500,324 555,339 610,345 670,344 700,336 755,304 790,285 830,278 890,275 920,280 970,297 1010,318 1050,330 1105,330 1150,321 1215,312 1250,302"],
    [850, "0,295 80,303 160,312 200,331 250,355 300,378 345,387 400,410 440,424 480,432 530,432 560,426 590,414 640,407 740,406 790,404 815,397"],
  ],
};

const volumeMa = {
  teal: [
    [0, "0,580 30,572 60,566 120,558 200,568 250,572 300,566 360,567 400,572 430,583 490,602 520,590 560,588 600,580 640,560 680,560 720,570 760,583 830,590 900,594 950,600 1030,603 1100,600 1160,597"],
    [420, "0,600 100,602 130,598 180,589 235,592 290,602 350,608 430,608 490,598 560,602 650,607 740,602 800,608 900,612 990,605 1060,610 1240,614"],
    [850, "0,616 100,616 200,613 260,614 340,616 380,611 430,607 480,609 560,612 620,615 690,610 760,615 815,615"],
  ],
  orange: [
    [0, "0,578 60,572 130,570 180,565 210,572 300,567 400,570 440,577 500,587 560,592 600,580 640,569 720,570 790,578 860,588 950,595 1080,600"],
    [420, "0,598 120,602 180,596 260,597 340,604 420,606 500,602 560,601 650,606 760,605 900,610 1000,606 1240,614"],
    [850, "0,615 200,615 300,614 400,613 490,608 560,611 640,613 740,613 815,615"],
  ],
};

const months = ["6月 13", "10月 3", "1月 23", "5月 15", "9月 4", "12月 25", "4月 15", "8月 5", "11月 25", "3月 17", "7月 7", "10月 27", "2月 16", "6月 8"];

const panels = {};
["price", "kdj", "macd", "volume"].forEach((id) => {
  panels[id] = document.getElementById(id);
});

function draw(panel, tag, className, attrs, text) {
  const el = document.createElementNS(NS, tag);
  el.setAttribute("class", className);
  Object.keys(attrs).forEach((key) => el.setAttribute(key, attrs[key]));
  if (text) el.textContent = text;
  panels[panel].appendChild(el);
}

function hline(panel, className, y, x1 = 0, x2 = RIGHT) {
  draw(panel, "line", className, { x1, x2, y1: y, y2: y });
}

function label(panel, x, y, text, className = "centered") {
  draw(panel, "text", className, { x, y }, text);
}

function series(panel, data) {
  Object.keys(data).forEach((color) => {
    const points = data[color].map(([left, pts]) =>
      pts.split(" ").map((p) => {
        const [x, y] = p.split(",");
        return (left + x / 3).toFixed(1) + "," + (420 + y / 3).toFixed(1);
      }).join(" ")
    ).join(" ");
    draw(panel, "polyline", "line-" + color, { points });
  });
}

const xAt = (i) => FIRST + STEP * i;

// grid
Object.keys(panels).forEach((id) => {
  for (let i = 3; i < 223; i += 16) {
    const x = Math.round(xAt(i)) - 0.5;
    draw(id, "line", "grid", { x1: x, x2: x, y1: 65, y2: 634 });
  }
  [1120.5, 1206.5].forEach((x) => draw(id, "line", "grid", { x1: x, x2: x, y1: 65, y2: 634 }));
});
[87.5, 136.5, 187.5, 286.5, 336.5, 386.5].forEach((y) => hline("price", "grid", y));
hline("kdj", "divider", 424.5, 0, 1274);
hline("macd", "divider", 489.5, 0, 1274);
hline("volume", "divider", 573.5, 0, 1274);
hline("volume", "grid", 585.5);
hline("volume", "grid", 607.5);
hline("macd", "grid", 538.5);

// price
hline("price", "last-price", 235.5, 3);
candles.forEach((c, i) => {
  const x = xAt(i);
  const cls = c.up ? "up" : "down";
  draw("price", "line", cls, { x1: x, x2: x, y1: c.high, y2: c.low });
  draw("price", "rect", cls, { x: x - 1.5, y: c.top + 0.4, width: 3, height: Math.max(c.bottom - c.top - 0.8, 0.3) });
});
["teal", "orange", "pink"].forEach((color) => {
  draw("price", "polyline", "line-" + color, { points: bands[color] });
});
draw("price", "circle", "marker", { cx: 77, cy: 386, r: 41.5 });
draw("price", "rect", "marker", { x: 142.5, y: 367, width: 81, height: 39 });
draw("price", "circle", "marker", { cx: 1040.7, cy: 273.4, r: 37 });
draw("price", "rect", "marker", { x: 1081.5, y: 231.5, width: 65.5, height: 64 });
label("price", 147, 401, "15443.2", "extreme");
draw("price", "path", "arrow", { d: "M136 398h7M138.500 395.500l-2.500 2.500 2.500 2.500" });
label("price", 826, 124.5, "126208.5", "extreme");
draw("price", "path", "arrow", { d: "M879 121.500h7M883.500 119l2.500 2.500-2.500 2.500" });
[["140000.0", 87], ["120000.0", 136.5], ["100000.0", 187], ["60000.0", 286], ["40000.0", 336.5], ["20000.0", 386]].forEach(([t, y]) => {
  label("price", 1240, y + 4, t);
});
draw("price", "rect", "tag-green", { x: 1206, y: 225.5, width: 68, height: 19 });
hline("price", "tag-tick", 235.5, 1206, 1212);
label("price", 1239.5, 239, "80800.1", "centered tag-text");

// kdj
[456.5, 466.5, 476.5].forEach((y) => hline("kdj", "guide", y));
series("kdj", kdj);
hline("kdj", "trend", 446.8, 1091.5);
label("kdj", 1240, 453, "100.00");
label("kdj", 1240, 486, "0.00");

// macd
macdBars.forEach((b, i) => {
  const value = parseInt(b, 10) / 3;
  draw("macd", "rect", "bar " + (value > 0 ? "up" : "down") + (b.endsWith("h") ? " hollow" : ""), {
    x: xAt(i) - 1.5,
    y: value > 0 ? 538.4 - value : 539,
    width: 3,
    height: Math.max(Math.abs(value) - 0.7, 0.5),
  });
});
series("macd", macd);
hline("macd", "trend", 545.8, 1052);
label("macd", 1240, 542, "0.0");

// volume
volumes.forEach((v, i) => {
  draw("volume", "rect", "bar " + (candles[i].up ? "up hollow" : "down"), {
    x: xAt(i) - 1.5, y: 629.3 - v / 3, width: 3, height: v / 3 - 0.4,
  });
});
series("volume", volumeMa);
draw("volume", "rect", "marker", { x: 1096.5, y: 608.5, width: 46, height: 23.5 });
label("volume", 1240, 589, "10.00M");
label("volume", 1240, 610, "5.00M");
draw("volume", "rect", "tag-orange", { x: 1206, y: 618, width: 67, height: 15.500 });
hline("volume", "tag-tick", 628.5, 1206, 1212);
label("volume", 1240, 631.5, "285.7k", "centered tag-text");
const mark = "M10.500 616a4 4 0 1 1 0-4.500M10.800 607.500v7c0 2 .5 3 2 3.500M21 612.500a3.500 3.500 0 1 0 0 7";
draw("volume", "path", "logo-halo", { d: mark });
draw("volume", "path", "logo-mark", { d: mark });
label("volume", 26, 620.5, "AiCoin", "logo");
months.forEach((m, i) => label("volume", xAt(3 + 16 * i), 648, m));
label("volume", 1121.5, 648, "8月 24");
label("volume", 1235, 650, "筹", "axis-button");
label("volume", 1256, 650, "爆", "axis-button");
```
